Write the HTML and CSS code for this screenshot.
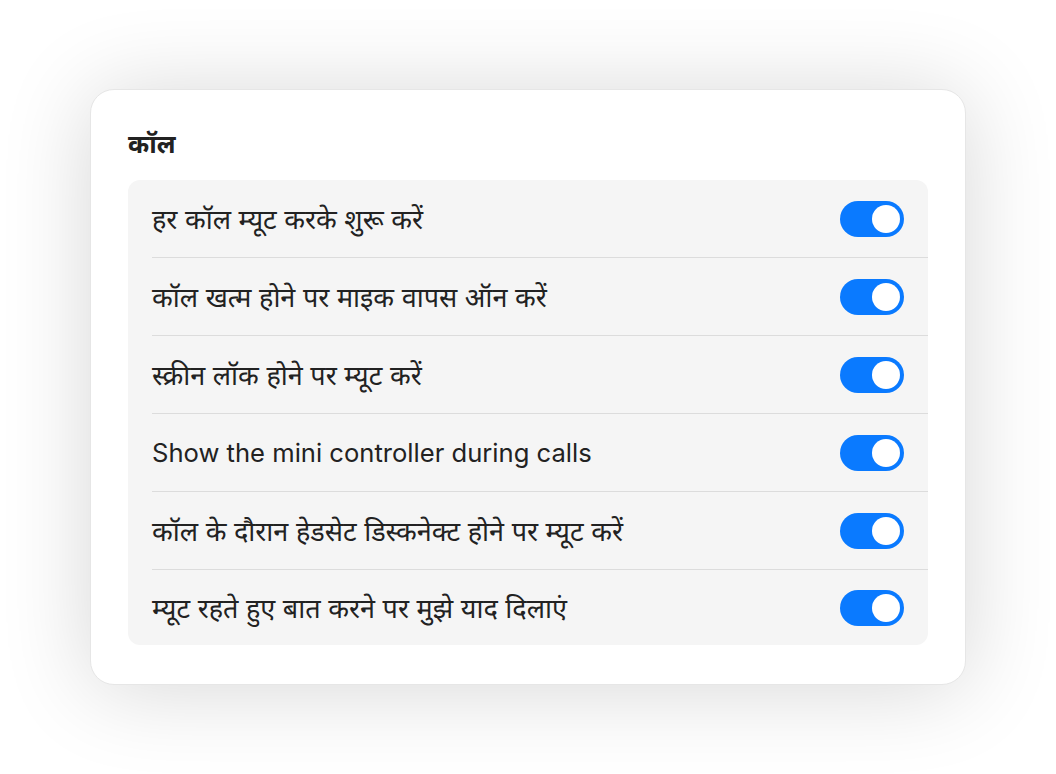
FILE: index.html
```html
<!DOCTYPE html>
<html lang="hi">
<head>
    <meta charset="UTF-8">
    <meta name="viewport" content="width=device-width, initial-scale=1.0">
    <title>कॉल सेटिंग्स</title>
    <link rel="stylesheet" href="styles.css">
</head>
<body>
    <div class="panel">
        <h2 class="panel-title">कॉल</h2>
        <div class="group">
            <div class="row">
                <span class="row-label">हर कॉल म्यूट करके शुरू करें</span>
                <span class="switch on"><span class="knob"></span></span>
            </div>
            <div class="row">
                <span class="row-label">कॉल खत्म होने पर माइक वापस ऑन करें</span>
                <span class="switch on"><span class="knob"></span></span>
            </div>
            <div class="row">
                <span class="row-label">स्क्रीन लॉक होने पर म्यूट करें</span>
                <span class="switch on"><span class="knob"></span></span>
            </div>
            <div class="row">
                <span class="row-label" lang="en">Show the mini controller during calls</span>
                <span class="switch on"><span class="knob"></span></span>
            </div>
            <div class="row">
                <span class="row-label">कॉल के दौरान हेडसेट डिस्कनेक्ट होने पर म्यूट करें</span>
                <span class="switch on"><span class="knob"></span></span>
            </div>
            <div class="row">
                <span class="row-label">म्यूट रहते हुए बात करने पर मुझे याद दिलाएं</span>
                <span class="switch on"><span class="knob"></span></span>
            </div>
        </div>
    </div>
</body>
</html>
```

FILE: styles.css
```css
* {
    box-sizing: border-box;
}
body {
    margin: 0;
    height: 100vh;
    background-color: #fff;
    font-family: Inter, "Noto Sans", "Noto Sans Devanagari", sans-serif;
    color: #222;
    display: flex;
    align-items: center;
    justify-content: center;
}
.panel {
    width: 876px;
    background-color: #fff;
    border: 1px solid #e6e6e6;
    border-radius: 24px;
    padding: 37px 37px 39px;
    box-shadow: 0 4px 90px rgba(0,0,0,0.16);
}
.panel-title {
    margin: 0 0 19px;
    font-size: 25.5px;
    font-weight: bold;
    line-height: 34px;
    color: #222;
}
.group {
    background-color: #f5f5f5;
    border-radius: 12px;
}
.row {
    height: 77px;
    margin-left: 24px;
    padding-right: 24px;
    display: flex;
    align-items: center;
    justify-content: space-between;
}
.row + .row {
    height: 78px;
    border-top: 1px solid #dcdcdc;
}
.row:last-child {
    height: 76px;
}
.row-label {
    font-size: 27px;
    color: #222;
}
.row-label:lang(en) {
    font-size: 25.6px;
}
.switch {
    width: 64px;
    height: 36px;
    border-radius: 18px;
    background-color: #e0e0e0;
    padding: 4px;
    display: flex;
}
.switch.on {
    background-color: #0a7aff;
    justify-content: flex-end;
}
.knob {
    width: 28px;
    height: 28px;
    border-radius: 50%;
    background-color: #fff;
}
```
